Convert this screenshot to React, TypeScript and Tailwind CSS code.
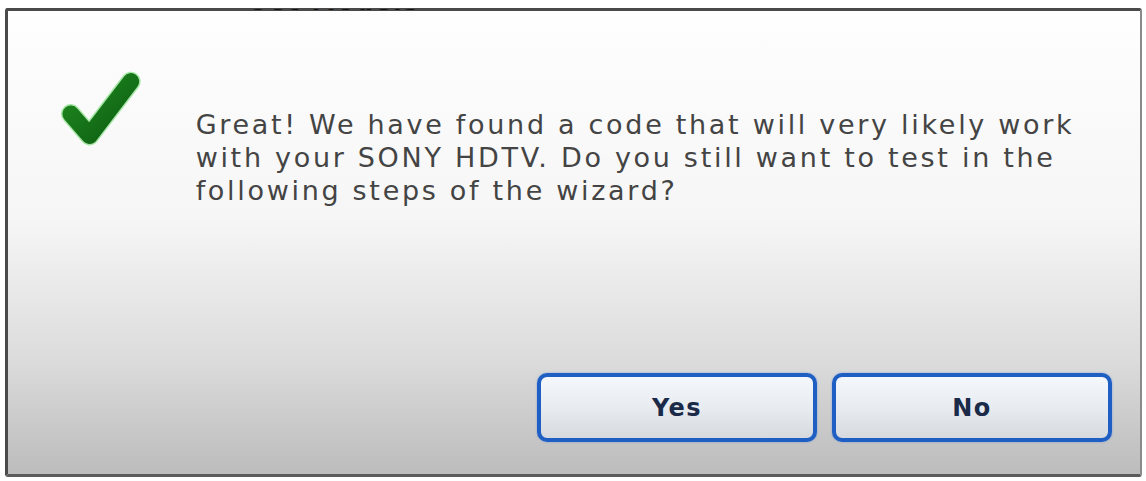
import React from "react";

const VERDANA = { fontFamily: "'DejaVu Sans', Verdana, sans-serif" };

function CheckMark() {
  return (
    <svg width="84" height="84" viewBox="0 0 84 84" aria-hidden="true">
      <defs>
        <linearGradient id="tick" x1="0" y1="0" x2="1" y2="1">
          <stop offset="0" stopColor="#1f8a1f" />
          <stop offset="1" stopColor="#0d5c12" />
        </linearGradient>
      </defs>
      <path
        d="M11 46 L30 68 L72 13"
        fill="none"
        stroke="#4fd14f"
        strokeWidth="20"
        strokeLinecap="round"
        strokeLinejoin="round"
        opacity="0.5"
      />
      <path
        d="M11 46 L30 68 L72 13"
        fill="none"
        stroke="url(#tick)"
        strokeWidth="17"
        strokeLinecap="round"
        strokeLinejoin="round"
      />
    </svg>
  );
}

function WizardButton({ label }: { label: string }) {
  return (
    <button
      type="button"
      className="flex h-[69px] w-[280px] items-center justify-center rounded-[10px] border-[4px] border-[#1f5fc4] bg-gradient-to-b from-[#f4f8fc] via-[#e8ecf0] to-[#d6dade] text-[24px] font-bold tracking-[1.5px] text-[#1b2a48] shadow-[0_0_2px_rgba(60,120,220,0.6)]"
      style={VERDANA}
    >
      {label}
    </button>
  );
}

export default function App() {
  return (
    <div className="h-[481px] w-[1146px] overflow-hidden bg-white pt-[8px]">
      <div className="relative ml-[5px] flex h-[469px] w-[1137px] flex-col rounded-[3px] border-t-[3px] border-l-[3px] border-r-[2px] border-b-[3px] border-t-[#4a4a4a] border-l-[#4a4a4a] border-r-[#8a8a8a] border-b-[#5a5a5a] bg-[linear-gradient(to_bottom,#fefefe_0%,#f6f6f6_45%,#dcdcdc_75%,#bcbcbc_100%)]">
        {/* bottom of the page heading behind the dialog, showing through its frame */}
        <div className="absolute -top-[2px] left-[242px] h-[3px] overflow-hidden">
          <p className="-mt-[19px] text-[24px] font-bold leading-[24px] tracking-[2px] text-[#111]" style={VERDANA}>
            Set Models
          </p>
        </div>

        <div className="flex pl-[52px] pt-[57px]">
          <CheckMark />
          <p
            className="ml-[53px] mt-[40px] w-[960px] text-[27px] leading-[33px] tracking-[2.7px] text-[#444]"
            style={VERDANA}
          >
            Great! We have found a code that will very likely work
            <br />
            with your SONY HDTV. Do you still want to test in the
            <br />
            following steps of the wizard?
          </p>
        </div>

        <div className="mt-auto mb-[32px] flex justify-end gap-[15px] pr-[28px]">
          <WizardButton label="Yes" />
          <WizardButton label="No" />
        </div>
      </div>
    </div>
  );
}
